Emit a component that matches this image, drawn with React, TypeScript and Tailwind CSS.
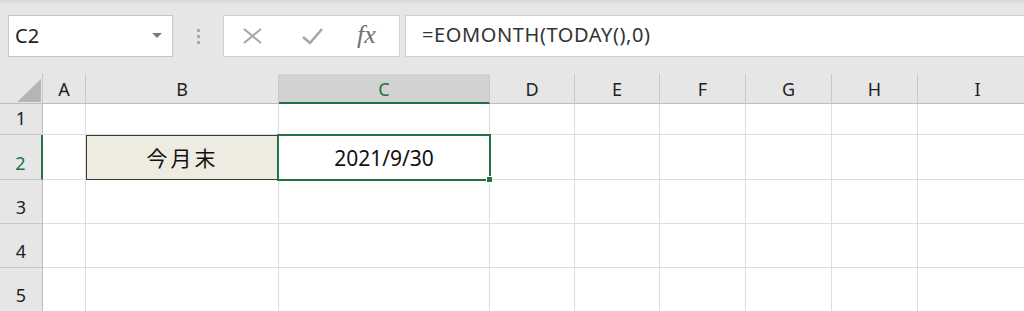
import React from "react";

const cols = [
  { k: "A", w: 43 },
  { k: "B", w: 193 },
  { k: "C", w: 211 },
  { k: "D", w: 85 },
  { k: "E", w: 85 },
  { k: "F", w: 86 },
  { k: "G", w: 86 },
  { k: "H", w: 86 },
  { k: "I", w: 120 },
];

const rows = [
  { n: 1, h: 31 },
  { n: 2, h: 45 },
  { n: 3, h: 44 },
  { n: 4, h: 44 },
  { n: 5, h: 44 },
];

const font = { fontFamily: '"Noto Sans", "Noto Sans CJK JP", sans-serif' };

export default function App() {
  return (
    <div className="w-[1024px] h-[311px] overflow-hidden bg-[#e6e6e6] relative" style={font}>
      {/* top strip */}
      <div className="h-[5px] bg-gradient-to-b from-[#d8d8d8] to-[#e6e6e6]" />
      {/* formula bar row */}
      <div className="flex items-start h-[69px] pt-[10px]">
        <div className="ml-[8px] w-[165px] h-[42px] bg-white border border-[#c6c6c6] flex items-center justify-between pl-[6px] pr-[10px]">
          <span className="text-[20px] text-[#222] leading-none">C2</span>
          <svg width="10" height="6" viewBox="0 0 10 6"><path d="M0 0 L10 0 L5 5 Z" fill="#7a7a7a" /></svg>
        </div>
        <div className="w-[50px] h-[42px] flex flex-col items-center justify-center gap-[3px]">
          <div className="w-[3px] h-[3px] bg-[#a8a8a8]" />
          <div className="w-[3px] h-[3px] bg-[#a8a8a8]" />
          <div className="w-[3px] h-[3px] bg-[#a8a8a8]" />
        </div>
        <div className="w-[177px] h-[42px] bg-white border border-[#d0d0d0] flex items-center">
          <svg className="ml-[19px]" width="19" height="16" viewBox="0 0 19 16">
            <path d="M1 1 L18 15 M18 1 L1 15" stroke="#a6a6a6" strokeWidth="2" />
          </svg>
          <svg className="ml-[40px]" width="21" height="17" viewBox="0 0 21 17">
            <path d="M1 9 L8 15 L20 1" stroke="#a6a6a6" strokeWidth="2.6" fill="none" />
          </svg>
          <span className="ml-[34px] text-[26px] text-[#707070] italic leading-none -mt-[3px]" style={{ fontFamily: '"Liberation Serif", serif' }}>fx</span>
        </div>
        <div className="ml-[5px] flex-1 h-[42px] bg-white border border-[#d0d0d0] border-r-0 flex items-center pl-[16px]">
          <span className="text-[20px] text-[#333] leading-none tracking-[0.6px] -mt-[2px]">=EOMONTH(TODAY(),0)</span>
        </div>
      </div>
      {/* grid */}
      <div className="relative">
        {/* header row */}
        <div className="flex h-[30px]">
          <div className="w-[43px] shrink-0 border-r border-[#c8c8c8] border-b border-b-[#bdbdbd] relative bg-[#e6e6e6]">
            <svg className="absolute left-[17px] top-[5px]" width="24" height="23" viewBox="0 0 24 23"><path d="M24 0 L24 23 L0 23 Z" fill="#b5b5b5" /></svg>
          </div>
          {cols.map((c) => (
            <div
              key={c.k}
              style={{ width: c.w }}
              className={
                c.k === "C"
                  ? "shrink-0 flex items-center justify-center pt-[2px] text-[18px] text-[#217346] bg-[#d2d2d2] border-r border-[#c8c8c8] border-b-2 border-b-[#217346]"
                  : "shrink-0 flex items-center justify-center pt-[2px] text-[18px] text-[#222] border-r border-[#c8c8c8] border-b border-b-[#bdbdbd]"
              }
            >
              {c.k}
            </div>
          ))}
        </div>
        {rows.map((r) => (
          <div key={r.n} className="flex" style={{ height: r.h }}>
            <div
              className={
                r.n === 2
                  ? "w-[43px] shrink-0 flex items-end justify-center pb-[2px] text-[18px] text-[#217346] bg-[#e6e6e6] border-r-2 border-r-[#217346] border-b border-[#c8c8c8]"
                  : "w-[43px] shrink-0 flex items-end justify-center pb-[2px] text-[18px] text-[#222] bg-[#e6e6e6] border-r border-r-[#bdbdbd] border-b border-[#c8c8c8]"
              }
            >
              {r.n}
            </div>
            {cols.map((c) => {
              if (r.n === 2 && c.k === "B") {
                return (
                  <div key={c.k} style={{ width: c.w }} className="shrink-0 bg-[#eeebe0] border border-[#3a3a3a] flex items-end justify-center pb-[5px] text-[21px] tracking-[3px] text-[#111]">
                    今月末
                  </div>
                );
              }
              if (r.n === 2 && c.k === "C") {
                return (
                  <div key={c.k} style={{ width: c.w }} className="shrink-0 bg-white border-r border-b border-[#dedede] flex items-end justify-center pb-[5px] text-[21px] text-[#111]">
                    2021/9/30
                  </div>
                );
              }
              return <div key={c.k} style={{ width: c.w }} className="shrink-0 bg-white border-r border-b border-[#dedede]" />;
            })}
          </div>
        ))}
        {/* active cell selection */}
        <div className="absolute left-[277px] top-[60px] w-[214px] h-[47px] border-2 border-[#217346] pointer-events-none" />
        <div className="absolute left-[486px] top-[102px] w-[7px] h-[7px] bg-[#217346] border border-white" />
      </div>
    </div>
  );
}
